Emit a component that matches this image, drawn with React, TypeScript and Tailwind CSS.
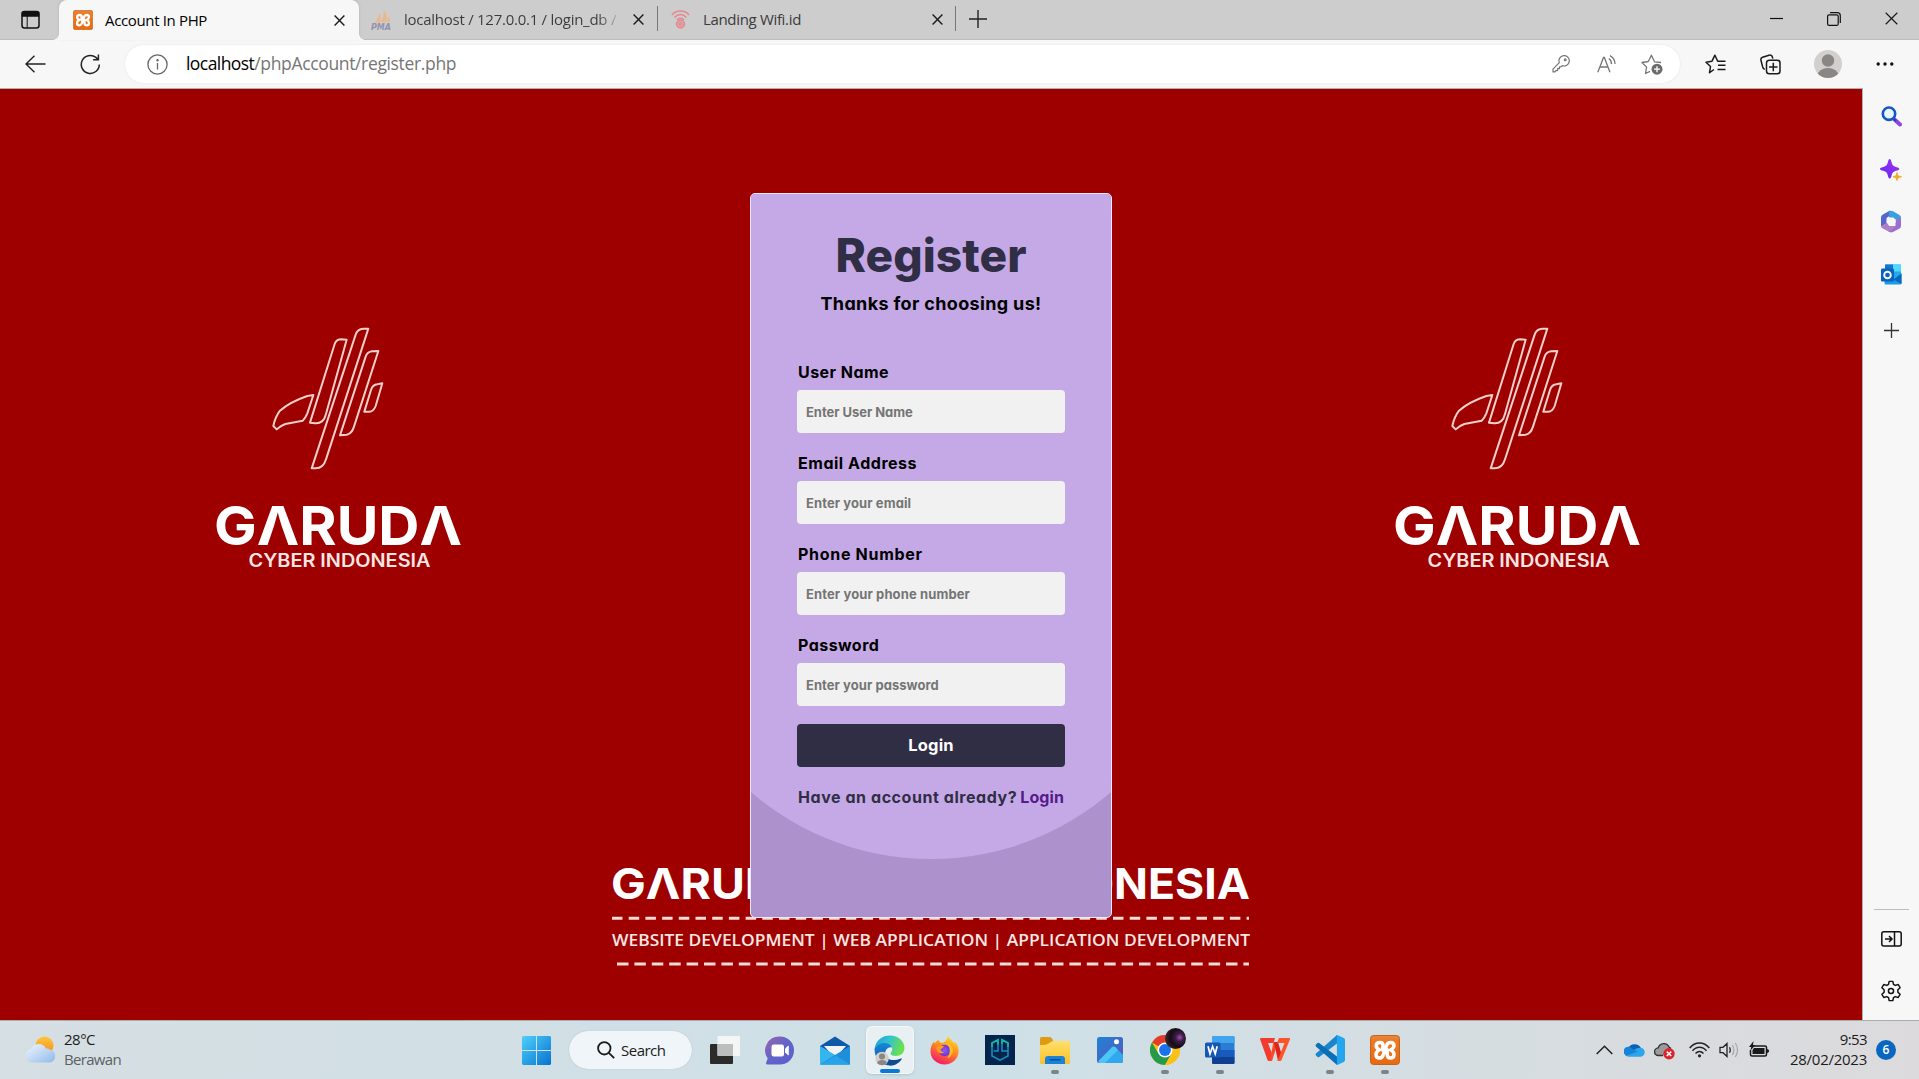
import React from "react";

const UI = "font-['Open_Sans',sans-serif]";

/* ---------- small shared icons ---------- */

function Cross({ size = 11, w = 1.4, color = "#1a1a1a" }: { size?: number; w?: number; color?: string }) {
  return (
    <svg width={size} height={size} viewBox="0 0 11 11" fill="none" stroke={color} strokeWidth={w} className="shrink-0">
      <path d="M.6.6l9.8 9.8M10.4.6L.6 10.4" />
    </svg>
  );
}

function Xampp({ size }: { size: number }) {
  return (
    <svg width={size} height={size} viewBox="0 0 30 30" className="shrink-0">
      <defs>
        <linearGradient id="xa" x1="0" y1="0" x2="0" y2="1">
          <stop offset="0" stopColor="#e08a4a" />
          <stop offset=".15" stopColor="#ee7a25" />
          <stop offset="1" stopColor="#e8690f" />
        </linearGradient>
      </defs>
      <rect x=".5" y=".5" width="29" height="29" rx="3" fill="url(#xa)" stroke="#c4651c" />
      <path
        d="M15 15H12.500L13 10Q12.800 7.500 10 7.500 6.200 7.500 6.200 11 6.500 13.500 9.500 14.800 6 16.500 6 19.500 6 23 9.500 23 12 23 13 20.500L15 15 17 9.500Q18 7.500 20.500 7.500 24 7.500 24 11 23.500 13.500 20.500 14.800 24 16.500 24 19.500 24 23 20.500 23 17.500 23 17.200 20L17.500 15z"
        fill="none"
        stroke="#fff"
        strokeWidth="3.500"
        strokeLinejoin="round"
        strokeLinecap="round"
      />
    </svg>
  );
}

/* ---------- browser chrome ---------- */

function TabStrip() {
  return (
    <div className="flex h-10 items-center border-b border-[#bdbdbd] bg-[#cdcdcd]">
      <div className="flex w-[59px] shrink-0 items-center pl-[21px]">
        <svg width="19" height="19" viewBox="0 0 19 19" fill="none" stroke="#111" strokeWidth="1.500">
          <rect x="1" y="1.500" width="17" height="16.500" rx="2.500" />
          <path d="M1.500 2.500h16v3.500h-16z" fill="#111" />
          <path d="M6.200 6v12" strokeWidth="1" />
        </svg>
      </div>
      <div className="relative mt-px flex h-10 w-[300px] shrink-0 items-center rounded-t-lg bg-[#f7f7f7] pr-[14px] pl-[14px] shadow-[0_-1px_3px_rgba(0,0,0,0.12)]">
        <span className="absolute bottom-0 -left-1.5 size-1.5 bg-[radial-gradient(circle_at_0_0,transparent_5.500px,#f7f7f7_6px)]" />
        <span className="absolute -right-1.5 bottom-0 size-1.5 bg-[radial-gradient(circle_at_100%_0,transparent_5.500px,#f7f7f7_6px)]" />
        <Xampp size={20} />
        <span className="ml-3 flex-1 text-[15px] tracking-[-0.35px] text-black">Account In PHP</span>
        <Cross />
      </div>
      <div className="flex h-10 w-[298px] shrink-0 items-center pr-[13px] pl-3">
        <svg width="21" height="20" viewBox="0 0 21 20" className="shrink-0">
          <path d="M4 12C7 9 8 5 8.500 3c1.500 3 1.500 7 .5 10zM10 12C12 8 13 4 12.800 0c3 3.500 4 8 2.600 12zM16 12c1-2 1.200-4 1-6 1.700 2 2.200 4 2 6z" fill="#e8b98c" />
          <text x="0" y="19.500" fontSize="8" fontWeight="700" fontStyle="italic" fontFamily="DejaVu Sans" textLength="20" lengthAdjust="spacingAndGlyphs" fill="#9292ab">PMA</text>
        </svg>
        <span className="ml-3 w-[214px] overflow-hidden bg-linear-to-r from-[#3b3b3b] from-90% to-[#b5b5b5] bg-clip-text text-[15px] tracking-[-0.26px] whitespace-nowrap text-transparent">
          localhost / 127.0.0.1 / login_db /
        </span>
        <span className="ml-auto flex"><Cross /></span>
      </div>
      <div className="flex h-10 w-[299px] shrink-0 items-center">
        <span className="-mt-0.5 h-[25px] w-px bg-[#777]" />
        <svg width="19" height="19" viewBox="0 0 19 19" fill="none" stroke="#e28a8f" className="ml-[13px] shrink-0">
          <path d="M1 5C5-.2 14-.2 18 5M3.500 7.500c3.500-4 8.500-4 12 0M6 9.800c2-2 5-2 7 0" strokeWidth="1.500" />
          <circle cx="9.500" cy="14" r="4" strokeWidth="1.400" fill="#dfa3a6" />
          <circle cx="9.500" cy="14" r="1.300" strokeWidth="1" />
        </svg>
        <span className="ml-[13px] flex-1 text-[15px] tracking-[-0.33px] text-[#3b3b3b]">Landing Wifi.id</span>
        <Cross />
        <span className="-mt-0.5 ml-3 h-[25px] w-px bg-[#777]" />
      </div>
      <svg width="18" height="18" viewBox="0 0 18 18" stroke="#222" strokeWidth="1.400" className="-mt-0.5 ml-[13px]">
        <path d="M0 9h18M9 0v18" />
      </svg>
      <div className="-mt-0.5 ml-auto flex items-center gap-[44px] pr-[21px]">
        <svg width="13" height="13" viewBox="0 0 13 13" stroke="#111" strokeWidth="1.200"><path d="M0 6.500h13" /></svg>
        <svg width="14" height="14" viewBox="0 0 14 14" fill="none" stroke="#111" strokeWidth="1.200">
          <rect x=".6" y="2.800" width="10.600" height="10.600" rx="1.500" />
          <path d="M3 .7h7.300a3 3 0 013 3V11" />
        </svg>
        <Cross size={13} w={1} />
      </div>
    </div>
  );
}

function Toolbar() {
  return (
    <div className="flex h-12 items-center bg-[#f7f7f7]">
      <svg width="21" height="18" viewBox="0 0 21 18" fill="none" stroke="#222" strokeWidth="1.400" className="ml-[25px]">
        <path d="M20.500 9H1M9.500.8L1 9l8.500 8.200" />
      </svg>
      <svg width="21" height="21" viewBox="0 0 21 21" fill="none" stroke="#222" strokeWidth="1.500" className="ml-[34px]">
        <path d="M19.300 10.500a9 9 0 11-3.400-7.100L18 5.500M18.400.5v5.300h-5.300" />
      </svg>
      <div className="ml-[24px] flex h-[38px] w-[1555px] items-center rounded-full bg-white pr-[17px] pl-[22px] shadow-[0_0_3px_rgba(0,0,0,0.08)]">
        <svg width="21" height="21" viewBox="0 0 21 21" fill="none" stroke="#666" strokeWidth="1.300">
          <circle cx="10.500" cy="10.500" r="9.600" />
          <path d="M10.500 9v6.500" />
          <circle cx="10.500" cy="6.200" r=".6" fill="#666" />
        </svg>
        <p className="-mt-0.5 ml-[18px] flex-1 text-[17.500px] tracking-[-0.35px] text-[#767676]">
          <span className="tracking-[-0.56px] text-black">localhost</span>/phpAccount/register.php
        </p>
        <svg width="18" height="18" viewBox="0 0 18 18" fill="none" stroke="#767676" strokeWidth="1.200" strokeLinejoin="round">
          <path d="M7.300 7.700A5.200 5.200 0 1110.200 10.600L9 11.800H7.400v1.900H5.500v1.900H3.800L2.900 16.900H1v-2.800z" />
          <circle cx="13.200" cy="4.800" r=".9" />
        </svg>
        <svg width="19" height="18" viewBox="0 0 19 18" fill="none" stroke="#767676" strokeWidth="1.300" className="ml-[27px]">
          <path d="M.8 17.300L6.500 2.500h.8L13 17.300M3 12h8M11.800 3.500c1.800 1.200 2.800 3.200 2.700 5.500M13 .6c3 1.800 5 4.900 5 8.400" />
        </svg>
        <svg width="22" height="21" viewBox="0 0 22 21" fill="none" stroke="#767676" strokeWidth="1.300" strokeLinejoin="round" className="ml-[25px]">
          <path d="M20 8.500l-6.500-.7L10.400 1.200 7.300 7.500 1 8.500l4.600 4.600L4.500 19.500 9 17.300" />
          <circle cx="16" cy="15.200" r="5.500" fill="#6b6b6b" stroke="none" />
          <path d="M13 15.200h6M16 12.200v6" stroke="#fff" />
        </svg>
      </div>
      <svg width="21" height="20" viewBox="0 0 21 20" fill="none" stroke="#1b1b1b" strokeWidth="1.500" strokeLinejoin="round" className="ml-[25px]">
        <path d="M9 15.500L4.500 18.700l1-6.200L1 8.200l6-1L9.900 1.200l2.800 6h7.800M13 11.300h7.500M12.500 15.500h8" />
      </svg>
      <svg width="21" height="21" viewBox="0 0 21 21" fill="none" stroke="#1b1b1b" strokeWidth="1.500" strokeLinejoin="round" className="ml-[34px]">
        <path d="M4.800 15.300C3.500 15 3 14 2.700 13L1 6.500C.6 5 1.200 3.800 2.600 3.300L9 1.200c1.800-.5 3 .3 3.400 1.800l.4 1.600" />
        <rect x="6.500" y="6.300" width="13.500" height="13.500" rx="2.800" />
        <path d="M9 13h8.500M13.300 8.800v8.500" />
      </svg>
      <svg width="28" height="28" viewBox="0 0 28 28" className="ml-[33px]">
        <clipPath id="av"><circle cx="14" cy="14" r="14" /></clipPath>
        <g clipPath="url(#av)">
          <rect width="28" height="28" fill="#d2d0ce" />
          <circle cx="14" cy="10.500" r="6.200" fill="#8a8683" />
          <ellipse cx="14" cy="25.500" rx="10.500" ry="7.500" fill="#8a8683" />
        </g>
      </svg>
      <svg width="18" height="4" viewBox="0 0 18 4" fill="#111" className="ml-[34px]">
        <circle cx="2.200" cy="2" r="1.700" /><circle cx="9" cy="2" r="1.700" /><circle cx="15.800" cy="2" r="1.700" />
      </svg>
    </div>
  );
}

/* ---------- page backdrop artwork ---------- */

function GarudaMark({ x }: { x: number }) {
  return (
    <g transform={`translate(${x} 221)`}>
      <g transform="scale(.33333)" fill="none" stroke="#f2cfca" strokeWidth="6" strokeLinejoin="round">
        <path d="M330 338L404 102Q409 88 424 88L440 89 378 312Q371 341 346 340z" />
        <path d="M335 475L467 74Q472 57 490 56L505 56 378 448Q370 476 345 475z" />
        <path d="M420 376L497 140Q501 126 516 124L535 123 462 350Q455 372 440 374z" />
        <path d="M493 305L513 240Q518 224 532 223L547 220 527 288Q520 306 506 305z" />
        <path d="M340 255L322 258Q270 276 240 302 226 320 220 348L230 358Q240 348 256 342L308 332Q316 325 322 310z" />
      </g>
      <text x="14" y="234.500" fontFamily="Inter" fontWeight="700" fontSize="54" textLength="248" lengthAdjust="spacingAndGlyphs" fill="#fff">GΛRUDΛ</text>
      <text x="48.500" y="257" fontFamily="Inter" fontWeight="600" fontSize="18" textLength="182" lengthAdjust="spacingAndGlyphs" fill="#fbe6e3">CYBER INDONESIA</text>
    </g>
  );
}

function Backdrop() {
  return (
    <svg className="absolute inset-0" width="1862" height="931" viewBox="0 0 1862 931">
      <GarudaMark x={200} />
      <GarudaMark x={1379} />
      <g fill="#fff" fontFamily="Inter" fontWeight="700" fontSize="43">
        <text x="611" y="809.500" textLength="202" lengthAdjust="spacingAndGlyphs">GΛRUDΛ</text>
        <text x="830" y="809.500" textLength="145" lengthAdjust="spacingAndGlyphs">CYBER</text>
        <text x="1001" y="809.500" textLength="249" lengthAdjust="spacingAndGlyphs">INDONESIA</text>
      </g>
      <path d="M612 829.300H1249" stroke="#f6dcd8" strokeWidth="3" strokeDasharray="10.500 6.200" />
      <text x="612" y="857" fontFamily="Open Sans" fontWeight="600" fontSize="17" textLength="638" lengthAdjust="spacingAndGlyphs" fill="#fbe6e3">
        WEBSITE DEVELOPMENT | WEB APPLICATION | APPLICATION DEVELOPMENT
      </text>
      <path d="M617 875H1249" stroke="#f6dcd8" strokeWidth="3" strokeDasharray="11.500 5.900" />
    </svg>
  );
}

/* ---------- register card ---------- */

const fields = [
  { label: "User Name", hint: "Enter User Name", type: "text", track: "tracking-[0.46px]", hintTrack: "tracking-[-0.04px]" },
  { label: "Email Address", hint: "Enter your email", type: "email", track: "tracking-[0.53px]", hintTrack: "tracking-[0.1px]" },
  { label: "Phone Number", hint: "Enter your phone number", type: "text", track: "tracking-[0.7px]", hintTrack: "tracking-[0.12px]" },
  { label: "Password", hint: "Enter your password", type: "password", track: "tracking-[0.45px]", hintTrack: "tracking-[0.06px]" },
];

function RegisterCard() {
  return (
    <div className="relative mt-[104px] h-[725px] w-[362px] overflow-hidden rounded-[5px] border border-[#f0e9f6] bg-[#ad91cd] font-['Inter',sans-serif] font-bold [font-feature-settings:'cv11']">
      <div className="absolute top-0 left-1/2 h-[665px] w-[551px] -translate-x-1/2 rounded-b-full bg-[#c5a9e6]" />
      <form className="relative px-[46px] pt-7">
        <h1 className="text-center text-[46px] leading-[66px] font-extrabold tracking-[0.1px] text-[#2f2e45]">Register</h1>
        <p className="mt-0.5 text-center text-[18px] leading-7 tracking-[0.35px] text-black">Thanks for choosing us!</p>
        <div className="mt-[42px] flex flex-col gap-[18px]">
          {fields.map((f) => (
            <div key={f.label}>
              <label className={`block pl-px text-base leading-6 text-black ${f.track}`}>{f.label}</label>
              <input
                type={f.type}
                placeholder={f.hint}
                className={`mt-1.5 block h-[43px] w-[268px] rounded-[4px] bg-[#f1f1f1] px-[9px] pt-px text-[13px] font-bold placeholder:text-[#757575] ${f.hintTrack}`}
              />
            </div>
          ))}
          <button type="button" className="h-[43px] w-[268px] rounded-[4px] bg-[#2f2e45] pb-px text-[16.500px] tracking-[0.2px] text-white">
            Login
          </button>
          <p className="flex justify-between pr-px pl-px text-base leading-6 whitespace-nowrap">
            <span className="tracking-[0.56px] text-[#2f2e45]">Have an account already?</span>
            <a className="tracking-[0.1px] text-[#551a8b]">Login</a>
          </p>
        </div>
      </form>
    </div>
  );
}

/* ---------- edge side bar ---------- */

function Sidebar() {
  return (
    <aside className="flex w-14 flex-col items-center bg-[#f7f7f7] pt-[18px]">
      <svg width="21" height="21" viewBox="0 0 21 21" fill="none">
        <path d="M13.500 13.500l5.500 5" stroke="#8b45e0" strokeWidth="4" strokeLinecap="round" />
        <path d="M12 12l3 3" stroke="#2a3fb0" strokeWidth="2" />
        <circle cx="8" cy="7.700" r="6.200" stroke="#1557c8" strokeWidth="2.600" fill="#eaf6ff" />
      </svg>
      <svg width="22" height="22" viewBox="0 0 22 22" className="mt-[32px]">
        <defs><linearGradient id="sp" x1="0" y1="1" x2="1" y2="0"><stop stopColor="#5a2be8" /><stop offset="1" stopColor="#a832f5" /></linearGradient></defs>
        <path d="M9.700 0c1 0 1.300 1.200 2 3.800.8 2.600 1.600 3.400 4.300 4.200 2.300.7 3.300 1 3.300 1.900s-1 1.200-3.300 1.900c-2.700.8-3.500 1.600-4.300 4.200-.7 2.600-1 3.500-2 3.500s-1.300-.9-2-3.500c-.8-2.600-1.600-3.400-4.300-4.200C1 11.100 0 10.800 0 9.900S1 8.700 3.400 8c2.700-.8 3.500-1.600 4.300-4.200C8.400 1.200 8.700 0 9.700 0z" fill="url(#sp)" />
        <path d="M17 13c.8 0 .8 3 1.500 3.500.6.600 3.500.5 3.500 1.300s-2.900.7-3.500 1.200c-.7.600-.7 3-1.500 3s-.8-2.400-1.500-3c-.6-.5-3-.4-3-1.200s2.400-.7 3-1.300c.7-.5.7-3.500 1.500-3.500z" fill="#efab2a" />
      </svg>
      <svg width="22" height="23" viewBox="0 0 22 23" className="mt-[29px]">
        <path d="M10 .5L2.500 4.700Q1 5.700 1 7.500v9l5.500-3V8l6.500-4.500z" fill="#5667c9" />
        <path d="M9 1.500Q11 0 13 1.200l6.500 3.800Q21 6 21 7.800V13l-5.500-4-6.500-1.500V1.500z" fill="#3a9fe0" />
        <path d="M21 8v8q0 1.500-1.500 2.500L13 22q-2 1-4-.2l-1-.6 7.500-5.500V9.500z" fill="#9a6fd0" />
        <path d="M1 16.500l5.800-4 2.700 3.500h6L10 21.800l-1.500-.3-6-3.300Q1.300 17.500 1 16.500z" fill="#ad7fc4" />
        <path d="M9 7.500h4.500l2.500 4-2.500 4.300H9L6.500 11.500z" fill="#f7f7f7" />
      </svg>
      <svg width="21" height="21" viewBox="0 0 21 21" className="mt-[31px]">
        <rect x="4" y=".5" width="16" height="17" rx="1" fill="#28a8ea" />
        <path d="M12 .5h8v7h-8z" fill="#50d9ff" />
        <path d="M4 .5h8v5H4z" fill="#0f78d0" />
        <path d="M3.500 11L12 16l8.500-6.500V19a1.500 1.500 0 01-1.500 1.500H5A1.500 1.500 0 013.500 19z" fill="#1a9be6" />
        <path d="M12.500 15.500l8 4.500V9.500z" fill="#0b66bd" />
        <rect x="0" y="4.500" width="13" height="13" rx="1.300" fill="#0a63bd" />
        <circle cx="6.500" cy="11" r="3.300" fill="none" stroke="#fff" strokeWidth="1.900" />
      </svg>
      <svg width="15" height="15" viewBox="0 0 15 15" stroke="#333" strokeWidth="1.300" className="mt-[38px]"><path d="M0 7.500h15M7.500 0v15" /></svg>
      <div className="mt-auto mb-[21px] h-px w-[35px] bg-[#bdbdbd]" />
      <svg width="21" height="16" viewBox="0 0 21 16" fill="none" stroke="#111" strokeWidth="1.500">
        <rect x=".8" y=".8" width="19.400" height="14.200" rx="2" />
        <path d="M13.500 1v14M4 8h7M8 5l3 3-3 3" />
      </svg>
      <svg width="22" height="22" viewBox="0 0 24 24" fill="none" stroke="#111" strokeWidth="1.600" strokeLinejoin="round" className="mt-[33px] mb-[18px]">
        <path d="M10 1.500h4l.7 3.200 2 1.200 3.200-1 2 3.500-2.400 2.300v2.600l2.400 2.300-2 3.500-3.200-1-2 1.200-.7 3.200h-4l-.7-3.200-2-1.200-3.200 1-2-3.500 2.400-2.300v-2.600L2.100 8.400l2-3.500 3.200 1 2-1.200z" />
        <circle cx="12" cy="12" r="2.800" />
      </svg>
    </aside>
  );
}

/* ---------- taskbar ---------- */

function App55({ children, open }: { children: React.ReactNode; open?: boolean }) {
  return (
    <div className="relative flex h-[58px] w-[55px] shrink-0 items-center justify-center">
      {children}
      {open && <span className="absolute bottom-[5px] left-1/2 h-1 w-2 -translate-x-1/2 rounded-full bg-[#7b8386]" />}
    </div>
  );
}

function TaskApps() {
  return (
    <div className="flex items-center">
      <App55>
        <svg width="30" height="28" viewBox="0 0 30 28">
          <rect x="0" y="8" width="23" height="20" rx="1" fill="#2b2b29" />
          <rect x="7.500" y="0" width="22.500" height="20" rx="1" fill="#f4f5f5" />
          <path d="M7.500 8H23v12H8.500a1 1 0 01-1-1z" fill="#bcbdbd" />
        </svg>
      </App55>
      <App55>
        <svg width="30" height="29" viewBox="0 0 30 29">
          <defs><linearGradient id="tm" x1="0" y1="0" x2="1" y2="1"><stop stopColor="#9767ac" /><stop offset=".5" stopColor="#6264c7" /><stop offset="1" stopColor="#5a5fd0" /></linearGradient></defs>
          <path d="M15 .5a14 14 0 110 28H2q-1.500-.5-.8-2l1.500-4A14 14 0 0115 .5z" fill="url(#tm)" />
          <rect x="6.500" y="8.500" width="12.500" height="12" rx="2.200" fill="#fff" />
          <path d="M20 12.800l3-3q.8-.4.800.5v8.400q0 .9-.8.5l-3-3z" fill="#fff" />
        </svg>
      </App55>
      <App55>
        <svg width="30" height="29" viewBox="0 0 30 29">
          <path d="M0 10L15 .5 30 10v8H0z" fill="#0e5aa8" />
          <path d="M4 10h22l-8 9h-6z" fill="#f3f3f3" />
          <path d="M0 10l16 9.500L30 28.500H0z" fill="#35b5ee" />
          <path d="M30 10v18.500H0L15 19z" fill="#1d8fdb" />
          <path d="M0 28.500h30L16 19.500z" fill="#28a2e8" />
        </svg>
      </App55>
      <App55>
        <div className="relative flex size-12 items-center justify-center rounded-md border border-white/50 bg-[#e9f0f3] shadow-sm">
          <svg width="31" height="31" viewBox="0 0 31 31">
            <defs>
              <linearGradient id="e1" x1="0" y1="0" x2="1" y2=".3"><stop stopColor="#1d9be0" /><stop offset=".5" stopColor="#30c3d0" /><stop offset="1" stopColor="#6be04e" /></linearGradient>
              <linearGradient id="e2" x1="0" y1="0" x2="0" y2="1"><stop stopColor="#1687d8" /><stop offset="1" stopColor="#0c59a4" /></linearGradient>
            </defs>
            <path d="M.5 14C2 5 8 .5 16 .5c8.500 0 14.500 6 14.500 12.500 0 5-4 8-8.500 8-3.500 0-5.500-1-5.500-2.500 0-1 1.700-1.800 1.700-4.300C18.200 11 15 8.500 11 8.500c-5 0-8.500 2.500-10.500 5.500z" fill="url(#e1)" />
            <path d="M.5 14C3 9.500 7 8 10.500 8c4 0 6.500 2 7.500 4.500-4-1-7 2.500-7 7 0 6 5.500 10 11 9.800C14 33 .5 28 .5 14z" fill="url(#e2)" />
            <path d="M11 19c0 4 5 6.500 10 6 3.500-.3 5.500-2 7-1.500C26.500 27 22 30.500 16 30.500 11.500 28 10.500 23 11 19z" fill="#0f4a93" />
            <circle cx="8" cy="23.500" r="6.800" fill="#d2d0ce" />
            <circle cx="8" cy="21.500" r="3" fill="#8a8683" />
            <path d="M3 28a5.200 4 0 0110 0 6.800 6.800 0 01-10 0z" fill="#8a8683" />
          </svg>
          <span className="absolute bottom-0 left-1/2 h-1 w-5 -translate-x-1/2 rounded-full bg-[#0a78d4]" />
        </div>
      </App55>
      <App55>
        <svg width="29" height="29" viewBox="0 0 29 29">
          <defs>
            <linearGradient id="ff" x1=".8" y1="0" x2=".3" y2="1"><stop stopColor="#ffe226" /><stop offset=".45" stopColor="#ff8a1e" /><stop offset="1" stopColor="#f5156c" /></linearGradient>
            <radialGradient id="fp"><stop stopColor="#9059ff" /><stop offset="1" stopColor="#6a35c9" /></radialGradient>
          </defs>
          <path d="M18 .3c1.500 2.500 4 4 5.800 6.500 1 .3 1.500-.3 1.800-.8 2 3 3 6 3 9 0 8-6.500 13.500-14 13.500S.5 23 .5 15.500C.5 11 2 7.500 4.200 5.500c0 .8.200 1.500.6 2C6 6 7 4.500 8.600 3.800c.2 1.300 1 2.200 2.400 3C15 7 16.500 4.500 18 .3z" fill="url(#ff)" />
          <circle cx="14.500" cy="14.500" r="5.800" fill="url(#fp)" />
          <path d="M6 12c2-2.500 6-2.800 8.500-1.500-1.500.5-2 2-3.500 2.300-1 1 .5 3.500 3 3.200-2.500 3-7 1-8-4z" fill="#ff9a1f" />
          <path d="M16 6c5 1.500 8 6 6.500 11-1 3-3 4.500-5 5 3-4 3.500-11-1.500-16z" fill="#ffbd2e" />
        </svg>
      </App55>
      <App55>
        <svg width="30" height="30" viewBox="0 0 30 30">
          <rect width="30" height="30" fill="#03254c" />
          <g fill="none" strokeWidth="1.500">
            <path d="M7 17.500V8l6-3.200V16H8.500M23 17V8l-6-3.200V16h5.500M7 17v4l8 4.200 8-4.200v-5" stroke="#1b8fc4" />
            <path d="M7 12V8l6-3.200v5M17 9V4.800L23 8v4" stroke="#19b8a6" />
          </g>
        </svg>
      </App55>
      <App55 open>
        <svg width="30" height="27" viewBox="0 0 30 27">
          <defs><linearGradient id="fo" x1="0" y1="0" x2="0" y2="1"><stop stopColor="#ffdf6b" /><stop offset="1" stopColor="#fbc02a" /></linearGradient></defs>
          <path d="M0 1.500Q0 0 1.500 0h8q1 0 1.700.8L13 3v5H0z" fill="#dd9a12" />
          <path d="M0 8q6 .3 9-1.800Q12 4 13.500 4H28.500Q30 4 30 5.500v20Q30 27 28.500 27h-27Q0 27 0 25.500z" fill="url(#fo)" />
          <path d="M5 22q0-3 3-3h14q3 0 3 3v5H5z" fill="#1a83d6" />
          <rect x="9.500" y="22" width="11" height="1.600" rx=".8" fill="#0d4f96" />
        </svg>
      </App55>
      <App55>
        <svg width="26" height="26" viewBox="0 0 26 26">
          <defs><linearGradient id="ph" x1="0" y1="0" x2="1" y2="1"><stop stopColor="#1d84d8" /><stop offset="1" stopColor="#5d54b8" /></linearGradient></defs>
          <rect width="26" height="26" rx="2.500" fill="url(#ph)" />
          <path d="M1.500 24L15 10.200q1.700-1.500 3.300 0L26 18v5.500q0 2.500-2.500 2.500h-21z" fill="#2fa8ee" />
          <path d="M1.500 24L15 10.200q1.700-1.500 3.300 0L21 13 8 26H2.500z" fill="#4cc6f7" />
          <circle cx="19.500" cy="4.800" r="2.500" fill="#fff" />
        </svg>
      </App55>
      <App55 open>
        <svg width="30" height="30" viewBox="0 0 48 48">
          <circle cx="24" cy="24" r="24" fill="#fbc116" />
          <path d="M24 24L3.200 12A24 24 0 0144.800 12z" fill="#e33b2e" />
          <path d="M3.200 12A24 24 0 0024 48l10.400-18H13.600z" fill="#269a48" />
          <path d="M24 12h20.800A24 24 0 0124 48l10.400-18z" fill="#fbc116" />
          <circle cx="24" cy="24" r="12" fill="#fff" />
          <circle cx="24" cy="24" r="9.500" fill="#1a73e8" />
        </svg>
        <span className="absolute top-[7px] left-7 size-[21px] rounded-full bg-[radial-gradient(circle_at_70%_45%,#a04bb8_0%,#3a1d42_22%,#150c18_50%,#57423a_100%)]" />
      </App55>
      <App55 open>
        <svg width="30" height="28" viewBox="0 0 30 28">
          <rect x="7" width="22.500" height="28" rx="1.500" fill="#2b7cd3" />
          <path d="M8.500 0H28q1.500 0 1.500 1.500V7H7V1.500Q7 0 8.500 0z" fill="#41a5ee" />
          <path d="M7 14h22.500v7H7z" fill="#185abd" />
          <path d="M7 21h22.500v5.500q0 1.500-1.500 1.500H8.500Q7 28 7 26.500z" fill="#103f91" />
          <rect x="0" y="6.500" width="15.500" height="15" rx="1.500" fill="#1757b5" />
          <path d="M3 10.300l2 7.500 2.600-7.300 2.600 7.300 2-7.500" fill="none" stroke="#fff" strokeWidth="1.700" />
        </svg>
      </App55>
      <App55>
        <svg width="30" height="24" viewBox="0 0 30 24">
          <path d="M0 1Q0 0 1 0h14l-1.500 5H8L12.500 17 11 23H9Q8 23 7.500 22z" fill="#f23a2e" />
          <path d="M13.500 4H18l-6 19H9.500z" fill="#fb4a26" />
          <path d="M14 4h4l3.500 12L20 23h-2z" fill="#e0231b" />
          <path d="M19 0h10q1.500 0 1 1.200L21.500 22q-.4 1-1.500 1h-2.500L24.500 5H17z" fill="#fb5426" />
        </svg>
      </App55>
      <App55 open>
        <svg width="30" height="30" viewBox="0 0 30 30">
          <path d="M22 0L1 18.500q-1 1 0 2l1.500 1.400q.8.600 1.700 0L22 8.500z" fill="#1b86cc" />
          <path d="M22 30L1 11.500q-1-1 0-2L2.500 8q.8-.6 1.700 0L22 21.500z" fill="#0a6fb8" />
          <path d="M21 .5q.7-.8 1.800-.3l6 2.900q1.200.6 1.200 1.900v20q0 1.300-1.200 1.900l-6 2.900q-1.100.5-1.800-.3.900.6.900-1V1.500q0-1.600-.9-1z" fill="#24a5f0" />
        </svg>
      </App55>
      <App55 open><Xampp size={30} /></App55>
    </div>
  );
}

function Tray() {
  return (
    <div className="ml-auto flex items-center">
      <svg width="17" height="10" viewBox="0 0 17 10" fill="none" stroke="#222" strokeWidth="1.500"><path d="M.7 9l7.800-7.800L16.300 9" /></svg>
      <svg width="21" height="14" viewBox="0 0 21 14" className="ml-[11px]">
        <path d="M4 5.500A7 6.500 0 0117 5l-7 5-9.500 1A4 4 0 014 5.500z" fill="#0a62b8" />
        <path d="M16.500 4.800A4.500 4.500 0 0117 13.700H4.500A4.200 4.200 0 01.7 11L10 7q3-2.500 6.500-2.200z" fill="#2ba5ec" />
        <path d="M.6 11A4.300 4.300 0 018 5.500l5.500 3.300L2 12.700z" fill="#1584d8" />
      </svg>
      <svg width="21" height="18" viewBox="0 0 21 18" className="mt-[2px] ml-[9px]">
        <path d="M9 13.500H4.500a3.800 3.800 0 01-.3-7.600C6 .3 13 .3 15 5l2 1.500" fill="#9b9b9b" stroke="#333" strokeWidth="1.400" />
        <circle cx="15" cy="11.800" r="5.700" fill="#d9252e" />
        <path d="M12.800 9.600l4.400 4.400M17.200 9.600L12.800 14" stroke="#fff" strokeWidth="1.500" />
      </svg>
      <svg width="21" height="16" viewBox="0 0 21 16" fill="none" stroke="#222" strokeWidth="1.500" className="-mt-px ml-[14px]">
        <path d="M.7 6C6-.8 15-.8 20.300 6M3.500 8.800c4-4.800 10-4.800 14 0M6.500 11.500c2.500-2.800 5.500-2.800 8 0" />
        <circle cx="10.500" cy="13.800" r="1.600" fill="#222" stroke="none" />
      </svg>
      <svg width="21" height="16" viewBox="0 0 21 16" fill="none" stroke="#222" strokeWidth="1.300" className="ml-[9px]">
        <path d="M1 5.300h3L8 1.500v13L4 10.700H1zM10.500 5.300q1.500 2.700 0 5.400" />
        <path d="M13.300 3q3.200 5 0 10M16.300 1q4.500 7 0 14" stroke="#a8a8a8" />
      </svg>
      <svg width="21" height="17" viewBox="0 0 21 17" className="-mt-0.5 ml-[9px]">
        <path d="M5 5h11q1.500 0 1.500 1.500v7Q17.500 15 16 15H3q-1.500 0-1.500-1.500V9" fill="none" stroke="#1a1a1a" strokeWidth="1.500" />
        <path d="M5 7h10.500v6H3.500V9zM18 8q2.200.5 2.200 2T18 12z" fill="#1a1a1a" />
        <path d="M4.500 0L0 6h2.200L1.500 9.500 6.500 4H4z" fill="#1a1a1a" />
      </svg>
      <div className="-mt-0.5 ml-[19px] w-[78px] text-right text-[15px] leading-5 text-[#1c1c1c]">
        <p className="tracking-[-0.6px]">9:53</p>
        <p className="tracking-[-0.26px] whitespace-nowrap">28/02/2023</p>
      </div>
      <span className="mr-[23px] ml-[9px] flex size-5 items-center justify-center rounded-full bg-[#0a67c0] text-[12px] font-semibold text-white">6</span>
    </div>
  );
}

function Taskbar() {
  return (
    <footer className="flex h-[59px] items-center border-t border-[#a9adaf] bg-linear-to-r from-[#d6dfe3] via-[#cde0e7] via-50% to-[#dcdadc]">
      <div className="flex w-[522px] items-center pl-[24px]">
        <svg width="33" height="28" viewBox="0 0 33 28">
          <defs>
            <linearGradient id="su" x1="0" y1="0" x2="0" y2="1"><stop stopColor="#ffc63a" /><stop offset="1" stopColor="#f28c1d" /></linearGradient>
            <linearGradient id="cl" x1="0" y1="0" x2="1" y2="1"><stop stopColor="#f3f8fe" /><stop offset="1" stopColor="#8fb8ea" /></linearGradient>
          </defs>
          <circle cx="20.500" cy="9.500" r="9" fill="url(#su)" />
          <path d="M8 26.500a6.800 6.800 0 01-.7-13.500A8 8 0 0122 12.500a5.500 5.500 0 014 1 6.600 6.600 0 01-.5 13z" fill="url(#cl)" />
        </svg>
        <div className="-mt-0.5 ml-[7px] text-[15px] leading-5">
          <p className="tracking-[-0.51px] text-[#1c1c1c]">28°C</p>
          <p className="tracking-[-0.68px] text-[#5c6163]">Berawan</p>
        </div>
      </div>
      <svg width="29" height="29" viewBox="0 0 29 29">
        <defs><linearGradient id="wn" gradientUnits="userSpaceOnUse" x1="0" y1="0" x2="29" y2="29"><stop stopColor="#4fd0fb" /><stop offset="1" stopColor="#0672cf" /></linearGradient></defs>
        <path d="M1 0h13v14H0V1zM15 0h13l1 1v13H15zM0 15h14v14H1l-1-1zM15 15h14v13l-1 1H15z" fill="url(#wn)" />
      </svg>
      <div className="ml-[18px] flex h-[38px] w-[123px] items-center rounded-full bg-[#eff5f8] pl-[28px] shadow-[0_0_1px_rgba(0,0,0,0.25)]">
        <svg width="18" height="18" viewBox="0 0 18 18" fill="none" stroke="#1a1a1a" strokeWidth="1.800"><circle cx="7.300" cy="7.300" r="6.200" /><path d="M11.800 11.800l5.400 5.400" /></svg>
        <span className="ml-1.5 text-[15px] tracking-[-0.5px] text-[#1c1c1c]">Search</span>
      </div>
      <div className="ml-[5px]"><TaskApps /></div>
      <Tray />
    </footer>
  );
}

export default function App() {
  return (
    <div className={`flex h-[1079px] w-[1919px] flex-col overflow-hidden ${UI}`}>
      <TabStrip />
      <Toolbar />
      <div className="flex min-h-0 flex-1">
        <main className="flex min-w-0 flex-1 flex-col border-t border-r border-[#b0b0b0]">
          <div className="relative flex flex-1 justify-center bg-[#9e0000]">
            <Backdrop />
            <RegisterCard />
          </div>
        </main>
        <Sidebar />
      </div>
      <Taskbar />
    </div>
  );
}
